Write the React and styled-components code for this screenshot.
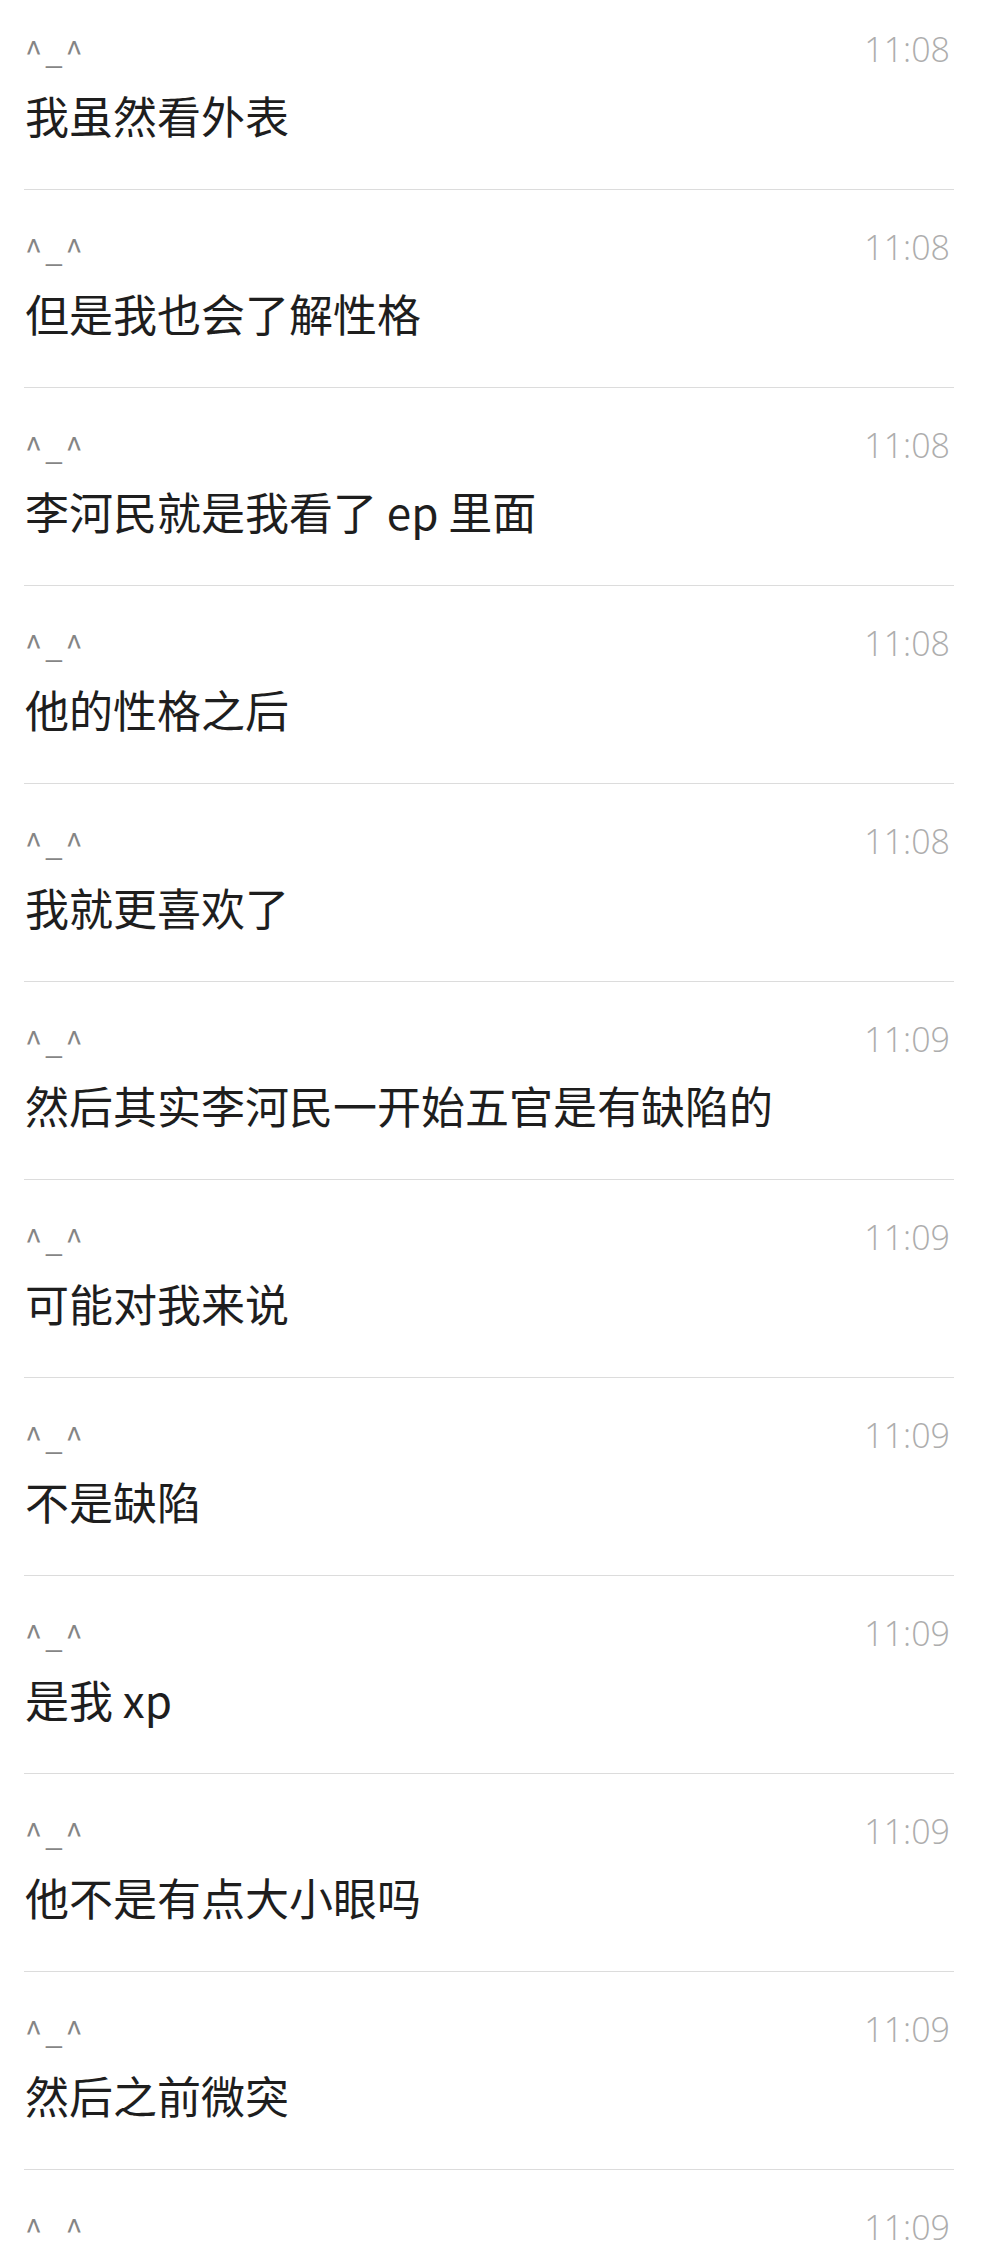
import styled, { createGlobalStyle } from "styled-components";

const GlobalStyle = createGlobalStyle`
  html, body {
    margin: 0;
    padding: 0;
    background: #ffffff;
  }
  body {
    font-family: "Noto Sans CJK SC", "Noto Sans", sans-serif;
    overflow: hidden;
  }
`;

const messages = [
  { text: "我虽然看外表", time: "11:08" },
  { text: "但是我也会了解性格", time: "11:08" },
  { text: "李河民就是我看了 ep 里面", time: "11:08" },
  { text: "他的性格之后", time: "11:08" },
  { text: "我就更喜欢了", time: "11:08" },
  { text: "然后其实李河民一开始五官是有缺陷的", time: "11:09" },
  { text: "可能对我来说", time: "11:09" },
  { text: "不是缺陷", time: "11:09" },
  { text: "是我 xp", time: "11:09" },
  { text: "他不是有点大小眼吗", time: "11:09" },
  { text: "然后之前微突", time: "11:09" },
  { text: "", time: "11:09" },
];

const App = () => {
  return (
    <>
      <GlobalStyle />
      <Page>
        <List>
          {messages.map((m, i) => (
            <Row key={i}>
              <Header>
                <Nick>^_^</Nick>
                <Time>{m.time}</Time>
              </Header>
              <Message>{m.text}</Message>
            </Row>
          ))}
        </List>
      </Page>
    </>
  );
};

const Page = styled.div`
  width: 1002px;
  height: 2244px;
  overflow: hidden;
  background: #fff;
`;

const List = styled.div`
  display: flex;
  flex-direction: column;
  margin-top: -8px;
  padding: 0 48px 0 24px;
`;

const Row = styled.div`
  box-sizing: border-box;
  height: 198px;
  display: flex;
  flex-direction: column;
  padding: 37px 4px 0 1px;
  border-bottom: 1px solid #dcdcdc;
`;

const Header = styled.div`
  display: flex;
  justify-content: space-between;
  align-items: center;
  height: 40px;
`;

const Nick = styled.span`
  font-family: "Noto Sans CJK SC", "Noto Sans", sans-serif;
  font-size: 31px;
  line-height: 40px;
  color: #858585;
  letter-spacing: 3px;
  padding-top: 4px;
`;

const Time = styled.span`
  font-family: "Open Sans", "Noto Sans", sans-serif;
  font-weight: 300;
  font-size: 34px;
  color: #adadad;
`;

const Message = styled.div`
  margin-top: 16px;
  font-size: 44px;
  line-height: 60px;
  color: #1e1e1e;
  white-space: nowrap;
`;

export default App;
